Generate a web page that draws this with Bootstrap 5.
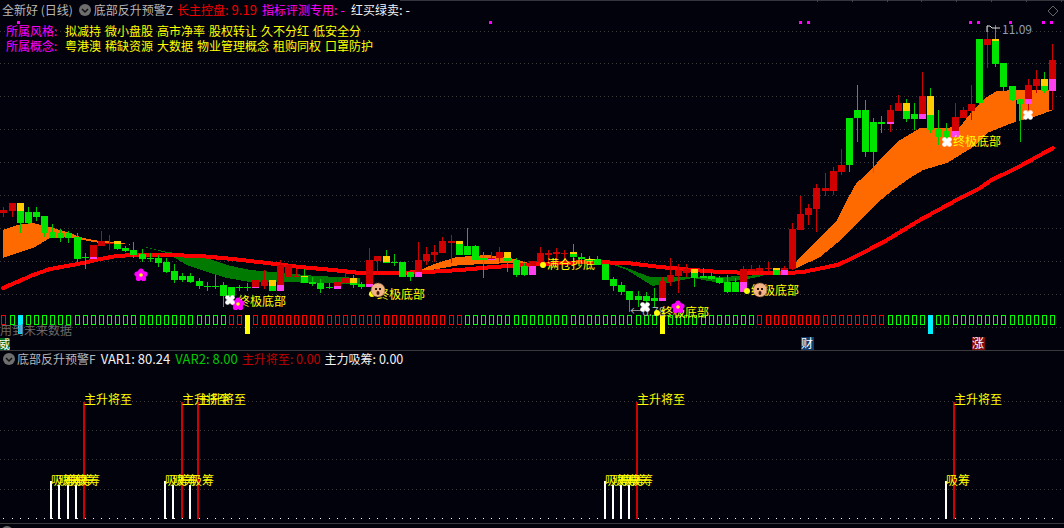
<!doctype html>
<html lang="zh">
<head>
<meta charset="utf-8">
<title>全新好 日线</title>
<link href="https://cdn.jsdelivr.net/npm/bootstrap@5.3.0/dist/css/bootstrap.min.css" rel="stylesheet">
<style>
html,body{height:100%;background:#02020c;overflow:hidden}
body{font-family:"Noto Sans CJK SC","Liberation Sans",sans-serif;font-size:12px;line-height:14px;color:#c8c8c8}
.kl-pane{height:351px;border-bottom:1px solid #3a3a3a;flex:none}
.kl-sub{height:173px;border-bottom:1px solid #3a3a3a;flex:none}
.kl-canvas{left:0;top:0;width:1064px}
.kl-canvas text{font-family:"Noto Sans CJK SC",sans-serif;font-size:12px}
.kl-head{height:20px;padding-left:2px;white-space:pre}
.kl-sub .kl-head{height:16px;padding-left:3px}
.c-gray{color:#b8b8b8}.c-red{color:#f00000}.c-mag{color:#f0f}.c-white{color:#f2f2f2}.c-yel{color:#ff0}.c-grn{color:#00c800}.c-dred{color:#c00000}
.kl-tags{padding-left:6px;height:15px}
.kl-label{width:59px}
.kl-ico{width:12px;height:12px;margin:0 3px 0 6px}
.kl-sub .kl-ico{margin:0 2px 0 0}
.kl-num{font-size:13px}
.kl-numb{font-size:12.6px}
.kl-gap1{margin-left:4px}.kl-gap2{margin-left:5px}.kl-gap3{margin-left:6px}
.kl-gapb{margin-left:5px}
.kl-gapc{margin-left:4px}
.t-y{fill:#ff0}
.t-w{fill:#fff}
</style>
</head>
<body>
<div class="d-flex flex-column vh-100">
  <section class="kl-pane position-relative overflow-hidden">
    <svg class="kl-canvas position-absolute" height="351" viewBox="0 0 1064 351">
      <g id="gridA"></g>
      <g id="bands" shape-rendering="crispEdges"></g>
      <g id="candles" shape-rendering="crispEdges"></g>
      <g id="boxes" shape-rendering="crispEdges"></g>
      <g id="dots" fill="#f0f" shape-rendering="crispEdges"></g>
      <text x="0" y="335" fill="#6a6a6a">用到未来数据</text>
      <text x="1002" y="34" fill="#8c9cb0">11.09</text>
      <path d="M987 32v-6h3l2 2h8" fill="none" stroke="#ddd"/>
      <path d="M1053 6l5 5-5 5-5-5z" fill="none" stroke="#666"/>
      <circle cx="543" cy="265" r="3" fill="#ff0"/><text class="t-y" x="547" y="269">满仓抄底</text>
      <text class="t-y" x="238" y="306">终极底部</text>
      <circle cx="372" cy="294" r="3" fill="#ff0"/><text class="t-y" x="377" y="299">终极底部</text>
      <text x="630" y="316" fill="#aaa">←6.78</text>
      <circle cx="657" cy="313" r="3" fill="#ff0"/><text class="t-y" x="661" y="317">终极底部</text>
      <circle cx="747" cy="291" r="3" fill="#ff0"/><text class="t-y" x="751" y="295">终极底部</text>
      <text class="t-y" x="953" y="146">终极底部</text>
      <g id="marks"></g>
      <rect x="0" y="338" width="10" height="13" fill="#006b1a"/><text class="t-w" x="-2" y="349">威</text>
      <rect x="801" y="337" width="13" height="13" fill="#123c6e"/><text class="t-w" x="801" y="348">财</text>
      <rect x="972" y="337" width="13" height="13" fill="#7c0b0b"/><text class="t-w" x="972" y="348">涨</text>
    </svg>
    <div class="kl-head position-relative d-flex align-items-center">
      <span class="c-gray">全新好 (日线)</span>
      <svg class="kl-ico" viewBox="0 0 12 12"><circle cx="6" cy="6" r="6" fill="#6e6e6e"/><path d="M3 5l3 3 3-3" fill="none" stroke="#111" stroke-width="1.5"/></svg>
      <span class="c-gray">底部反升预警Z</span>
      <span class="c-red kl-gap1">长主控盘<span class="kl-num">: 9.19</span></span>
      <span class="c-mag kl-gap2">指标评测专用<span class="kl-num">: -</span></span>
      <span class="c-white kl-gap3">红买绿卖<span class="kl-num">: -</span></span>
    </div>
    <div class="position-relative pt-1">
      <div class="kl-tags d-flex"><span class="c-mag kl-label">所属风格:</span><div class="d-flex gap-1 c-yel"><span>拟减持</span><span>微小盘股</span><span>高市净率</span><span>股权转让</span><span>久不分红</span><span>低安全分</span></div></div>
      <div class="kl-tags d-flex"><span class="c-mag kl-label">所属概念:</span><div class="d-flex gap-1 c-yel"><span>粤港澳</span><span>稀缺资源</span><span>大数据</span><span>物业管理概念</span><span>租购同权</span><span>口罩防护</span></div></div>
    </div>
  </section>
  <section class="kl-sub position-relative">
    <svg class="kl-canvas position-absolute" height="173" viewBox="0 352 1064 173">
      <g id="gridB"></g>
      <g id="vols" shape-rendering="crispEdges"></g>
      <text class="t-y" x="84" y="405">主升将至</text>
      <text class="t-y" x="182" y="405">主升将至</text>
      <text class="t-y" x="198" y="405">主升将至</text>
      <text class="t-y" x="637" y="405">主升将至</text>
      <text class="t-y" x="954" y="405">主升将至</text>
      <g id="xc"></g>
    </svg>
    <div class="kl-head position-relative d-flex align-items-center">
      <svg class="kl-ico" viewBox="0 0 12 12"><circle cx="6" cy="6" r="6" fill="#6e6e6e"/><path d="M3 5l3 3 3-3" fill="none" stroke="#111" stroke-width="1.5"/></svg>
      <span class="c-gray">底部反升预警F</span>
      <span class="c-white kl-gapb kl-num">VAR1: 80.24</span>
      <span class="c-grn kl-gapb kl-num">VAR2: 8.00</span>
      <span class="c-dred kl-gapc">主升将至<span class="kl-numb">: 0.00</span></span>
      <span class="c-white kl-gapc">主力吸筹<span class="kl-numb">: 0.00</span></span>
    </div>
  </section>
  <svg width="1064" height="4" viewBox="0 525 1064 4"><circle cx="7" cy="533" r="6" fill="#6e6e6e"/></svg>
</div>
<script src="https://cdn.jsdelivr.net/npm/bootstrap@5.3.0/dist/js/bootstrap.bundle.min.js"></script>
<script>
const NS='http://www.w3.org/2000/svg';
function el(p,n,a){const e=document.createElementNS(NS,n);for(const k in a)e.setAttribute(k,a[k]);document.getElementById(p).appendChild(e);return e}
const cx=i=>Math.round(3.4+8.13*i);
el('gridA','rect',{x:400,y:0,width:664,height:1,fill:'#34363e','shape-rendering':'crispEdges'});
for(let x=817;x<1064;x+=34.8)el('gridA','rect',{x:Math.round(x),y:0,width:1,height:2,fill:'#44464e','shape-rendering':'crispEdges'});
[31,63,96,129,162,195,228,261,294,327].forEach(y=>el('gridA','line',{x1:0,x2:1064,y1:y+.5,y2:y+.5,stroke:'#3c3c3c','stroke-dasharray':'1 3'}));
[402,431,460,490].forEach(y=>el('gridB','line',{x1:0,x2:1064,y1:y+.5,y2:y+.5,stroke:'#3c3c3c','stroke-dasharray':'1 3'}));
const poly=(up,lo,c)=>el('bands','polygon',{points:up.concat(lo.slice().reverse()).map(p=>p.join(',')).join(' '),fill:c});
poly([[3,230],[17,225],[33,223],[50,227],[67,232],[83,238],[100,241],[117,242],[133,245]],[[3,258],[17,253],[33,248],[50,238],[67,237],[83,240],[100,243],[117,243],[133,245]],'#ff6a00');
poly([[137,245],[167,252],[187,254],[207,258],[227,265],[250,270],[283,273],[317,276],[360,278]],[[137,245],[167,253],[187,265],[207,272],[227,278],[250,282],[283,282],[317,283],[333,283],[360,285]],'#007a00');
poly([[420,270],[437,263],[457,257],[487,255],[510,258],[537,265]],[[420,272],[443,268],[460,265],[487,264],[510,263],[537,265]],'#ff6a00');
poly([[600,260],[627,268],[650,277],[677,277],[720,277],[763,275]],[[600,260],[627,270],[643,280],[653,286],[667,283],[693,278],[720,283],[747,279],[763,276]],'#007a00');
poly([[795,268],[797,260],[817,240],[837,220],[847,200],[857,182],[860,180],[877,163],[897,142],[920,128],[940,128],[960,127],[973,110],[987,97],[997,91],[1017,90],[1040,90],[1053,90]],[[795,268],[797,268],[820,257],[837,243],[860,220],[877,203],[893,190],[910,178],[923,170],[947,163],[973,147],[987,133],[1007,125],[1022,120],[1040,115],[1053,110]],'#ff6a00');
el('bands','rect',{x:1016,y:100,width:3,height:24,fill:'#02020c'});
el('bands','rect',{x:1049,y:91,width:3,height:19,fill:'#02020c'});
el('bands','polyline',{points:'3,288 17,282 33,275 50,269 67,266 83,263 100,259 117,256 133,255 167,255 200,256 233,259 267,263 300,267 333,270 360,273 393,273 427,272 460,270 493,267 527,265 560,263 593,262 627,263 660,267 693,270 720,272 753,273 787,273 803,272 837,265 853,258 887,240 920,220 953,202 980,188 993,179 1013,170 1053,148',fill:'none',stroke:'#f00','stroke-width':4,'stroke-linejoin':'round','stroke-linecap':'round'});
const C=[['r',210,213,207,217],['r',203,211,203,217],['y',203,223,203,233,211],['g',212,223,207,224],['g',212,217,207,221],['g',216,233,216,237],['g',232,238,224,238],['g',233,238,229,242],['g',233,238,231,243],['g',237,259,233,262],['g',257,258,253,269],['m',245,259,245,260,257],['r',241,246,231,246],['r',243,244,235,250],['y',241,249,241,250,244],['g',248,251,246,252],['g',250,255,242,258],['g',254,259,249,262],['g',258,259,253,262],['g',258,263,255,267],['g',262,272,258,273],['g',271,280,264,283],['g',276,280,273,282],['g',276,282,273,283],['g',281,286,278,289],['g',286,287,282,291],['g',286,287,275,289],['g',285,296,282,307],['g',287,296,287,298],['g',287,288,285,291],['g',287,288,283,291],['m',280,288,280,288,287],['r',280,286,270,289],['y',280,291,280,291,286],['m',265,291,260,291,285],['r',265,277,265,277],['r',276,277,269,277],['y',276,283,269,283,277],['g',282,284,277,286],['g',283,289,279,293],['g',287,288,283,289],['m',282,289,278,289,286],['r',278,283,273,284],['y',278,285,275,288,283],
['g',284,287,282,289],['m',260,287,248,287,284],['r',256,261,256,275],['y',256,263,250,263,262],['g',262,263,254,266],['g',262,277,262,277],['g',272,277,272,281],['m',260,277,242,277,272],['r',254,261,247,265],['r',252,255,245,262],['r',241,253,237,253],['r',241,243,235,263],['y',241,255,241,255,244],['g',246,255,228,255],['g',246,260,245,260],['g',258,260,252,278],['m',258,260,252,260,259],['r',252,258,247,262],['y',252,261,252,272,258],['g',260,275,258,277],['g',266,275,263,276],['m',261,275,261,275,266],['r',253,262,247,263],['r',253,255,250,263],['r',252,254,248,262],['r',253,254,250,261],['y',252,257,244,262,254],['g',257,259,253,262],['g',259,261,256,264],['g',259,265,256,265],['g',264,280,264,280],['g',279,286,277,291],['g',285,292,282,295],['g',291,300,291,312],['g',296,300,291,307],['g',296,301,292,304],['g',298,301,288,307],['m',281,301,277,301,298],['r',275,282,258,286],['r',270,276,264,293],['r',269,273,264,277],['y',269,278,269,287,273],['g',276,278,268,278],['g',276,279,272,280],['g',278,283,276,284],
['g',282,292,275,293],['g',282,292,278,292],['m',269,292,266,292,282],['r',269,271,265,271],['r',268,271,265,274],['r',268,269,262,272],['y',268,275,268,275,270],['m',268,275,266,275,270],['r',229,269,223,270],['r',214,230,196,230],['r',208,215,204,225],['r',188,209,184,232],['r',188,191,173,196],['r',171,191,167,195],['r',165,172,149,175],['g',118,165,118,172],['g',110,118,85,142],['g',110,152,100,157],['g',122,152,118,173],['g',122,124,116,133],['m',110,124,105,132,122],['r',103,111,95,111],['y',103,119,99,122,111],['g',114,119,103,130],['m',96,119,72,119,114],['y',96,130,88,133,115],['g',129,137,110,145],['g',131,137,123,142],['m',117,137,103,137,131],['r',110,118,107,118],['r',104,111,85,120],['g',39,103,39,105],['r',39,45,25,68],['y',39,64,25,67,41],['g',63,87,63,91],['g',86,100,86,101],['g',99,104,99,142],['m',85,104,79,110,99],['r',79,86,70,93],['y',79,91,72,93,86],['m',60,91,44,110,79]];
const G='#00e400',R='#d00000',Y='#ffcc00',M='#ff40f0';
C.forEach((c,i)=>{const [t,a,b,h,l,s]=c,x=cx(i),dn=t=='r'||t=='m';
 el('candles','rect',{x:x,y:h,width:1,height:Math.max(l-h,1),fill:dn?R:'#00c800'});
 const r=(y1,y2,f)=>el('candles','rect',{x:x-3,y:y1,width:7,height:Math.max(y2-y1,1),fill:f});
 if(t=='g')r(a,b,G);else if(t=='r')r(a,b,R);else if(t=='y'){r(a,s,Y);r(s,b,G)}else{r(a,s,R);r(s,b,M)}
});
for(let i=0;i<130;i++){const x=cx(i);
 if(i==2||i==114){el('boxes','rect',{x:x-2,y:315,width:5,height:19,fill:'#00f0ff'});continue}
 if(i==30||i==81){el('boxes','rect',{x:x-2,y:315,width:5,height:19,fill:'#ff0'});continue}
 const red=i==0||(i>=28&&i<=56)||(i>=93&&i<=108);
 el('boxes','rect',{x:x-2+.5,y:315.5,width:4,height:9,fill:'none',stroke:red?'#f00':'#0f0'});
}
[18,490,800,808,970,978,1010,1043,1051].forEach(x=>el('dots','rect',{x:x-1,y:21,width:3,height:3}));
const flower=(x,y)=>{el('marks','circle',{cx:x,cy:y,r:5,fill:'#f0f'});[[0,-4],[4,-1],[2.5,3.5],[-2.5,3.5],[-4,-1]].forEach(d=>el('marks','circle',{cx:x+d[0],cy:y+d[1],r:2.6,fill:'#f0f'}));el('marks','circle',{cx:x,cy:y,r:1.8,fill:'#ff0'})};
[[141,275],[238,304],[678,307]].forEach(p=>flower(p[0],p[1]));
const blob=(x,y)=>[[-2.4,-2.4],[2.4,-2.4],[-2.4,2.4],[2.4,2.4],[0,0]].forEach(d=>el('marks','circle',{cx:x+d[0],cy:y+d[1],r:2.4,fill:'#fff'}));
[[230,300],[645,307],[947,142],[1028,115]].forEach(p=>blob(p[0],p[1]));
const face=(x,y)=>{el('marks','circle',{cx:x,cy:y,r:7,fill:'#f2b484',stroke:'#7a4a28','stroke-width':.8,'stroke-dasharray':'2 1'});el('marks','rect',{x:x-3,y:y-2,width:2,height:2,fill:'#2a1408'});el('marks','rect',{x:x+1,y:y-2,width:2,height:2,fill:'#2a1408'});el('marks','ellipse',{cx:x,cy:y+3,rx:1.5,ry:2,fill:'#401810'})};
face(378,290);face(760,290);
[84,182,198,637,954].forEach(x=>el('vols','rect',{x:x-1,y:403,width:2,height:117,fill:R}));
[[51,482],[59,486],[68,486],[76,486],[165,482],[173,486],[190,486],[605,482],[613,486],[621,486],[629,486],[946,482]].forEach(p=>{el('vols','rect',{x:p[0]-1,y:p[1],width:2,height:520-p[1],fill:'#fff'});
 const t=document.createElementNS(NS,'text');t.setAttribute('x',p[0]);t.setAttribute('y',486);t.setAttribute('class','t-y');t.textContent='吸筹';document.getElementById('xc').appendChild(t)});
for(let i=0;i<130;i++)el('vols','rect',{x:cx(i),y:519,width:1,height:1,fill:'#fff'});
</script>
</body>
</html>
